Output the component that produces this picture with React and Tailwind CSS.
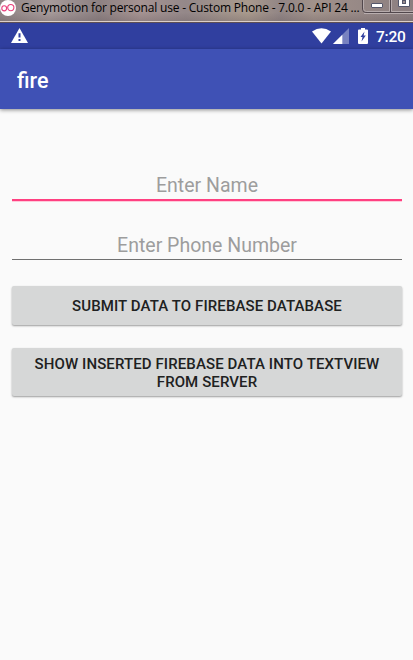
import React from "react";

function WindowBar() {
  return (
    <div className="flex h-[23px] items-start overflow-hidden border-b border-[#5e4f55] bg-[linear-gradient(to_right,#8f8484_0%,#a69a9a_12%,#8d8182_24%,#a59392_34%,#948889_45%,#a99a8d_60%,#918585_68%,#a1928b_76%,#8b7e80_100%)] font-['Open_Sans','Noto_Sans',sans-serif]">
      <div className="flex h-[22px] w-full items-start border-b border-[#dccfc8] bg-linear-to-b from-transparent from-60% to-[#5d505540]">
        <svg width="17" height="17" viewBox="0 0 17 17" className="shrink-0">
          <circle cx="8" cy="8" r="8" fill="#fff" />
          <ellipse cx="4.200" cy="8.300" rx="2.400" ry="2.600" fill="none" stroke="#e8407c" strokeWidth="1.1" />
          <circle cx="10.800" cy="7.600" r="3.100" fill="none" stroke="#e8407c" strokeWidth="1.1" />
        </svg>
        <span className="ml-1 w-[341px] shrink-0 text-[12px] leading-[16px] tracking-[-0.19px] whitespace-nowrap text-black">
          Genymotion for personal use - Custom Phone - 7.0.0 - API 24 ...
        </span>
        <svg width="51" height="14" viewBox="0 0 51 14" className="shrink-0">
          <path d="M0.5 0V9Q0.5 12.5 4 12.5H51M28.5 0V12" fill="none" stroke="#51474c" />
          <path d="M1.5 0V8.5Q1.5 11.5 4.5 11.5H27.5V0M29.5 0V11.5H51" fill="none" stroke="#b6abac" />
          <path d="M2 13.5H51" stroke="#b9aeaf" />
          <rect x="9.5" y="3.5" width="11" height="4" rx="0.5" fill="#fff" stroke="#55576a" />
          <path d="M36.500 0V6.500H47.500V0" fill="#fff" stroke="#55576a" />
          <rect x="40.500" y="0.500" width="3" height="3" fill="#998d8e" stroke="#55576a" />
        </svg>
      </div>
    </div>
  );
}

function StatusBar() {
  return (
    <div className="flex h-[26px] items-center bg-[#303f9f] pr-2 pl-[11px]">
      <svg width="17" height="15" viewBox="0 0 17 15" className="mb-[1px]">
        <path d="M8.500 0L17 15H0Z" fill="#fff" />
        <path d="M7.500 5.200H9.500V9.600H7.500ZM7.500 11H9.500V12.900H7.500Z" fill="#303f9f" />
      </svg>
      <svg width="19" height="16" viewBox="0 0 19 16" className="ml-auto">
        <path d="M0 3.600Q9.500 -3.200 19 3.600L9.500 15.500Z" fill="#fff" />
      </svg>
      <svg width="16" height="16" viewBox="0 0 16 16" className="ml-[2px]">
        <path d="M16 0V16H0Z" fill="#fff" opacity=".35" />
        <path d="M9.300 6.700V16H0Z" fill="#fff" />
      </svg>
      <svg width="10" height="16" viewBox="0 0 10 16" className="ml-[9px]">
        <path d="M3 0H7V1.500H9Q10 1.500 10 2.500V15Q10 16 9 16H1Q0 16 0 15V2.500Q0 1.500 1 1.500H3Z" fill="#fff" />
        <path d="M6.500 3.500L2.500 9H4.500L3.500 13.500L7.800 7.500H5.600Z" fill="#303f9f" />
      </svg>
      <span className="ml-[8px] w-[29px] pt-[3px] text-[15.500px] leading-none font-medium tracking-[-0.2px] whitespace-nowrap text-white">7:20</span>
    </div>
  );
}

function Field({ label, active }) {
  return (
    <div
      className={
        active
          ? "flex h-[32px] items-start justify-center border-b-2 border-[#ff4081] shadow-[0_1px_0_#ffc9da]"
          : "mt-[27px] flex h-[32px] items-start justify-center border-b border-[#707070]"
      }
    >
      <span
        className={
          active
            ? "pt-[2px] text-[19.500px] leading-[30px] whitespace-nowrap text-[#9d9d9d]"
            : "pt-[3px] text-[19.500px] leading-[30px] whitespace-nowrap text-[#9d9d9d]"
        }
      >
        {label}
      </span>
    </div>
  );
}

const button =
  "flex w-full items-center justify-center rounded-[2px] bg-[#d6d7d7] text-center text-[15px] leading-[18px] font-medium tracking-[0.1px] text-[#202121] shadow-[0_1px_2px_rgba(0,0,0,0.38)]";

export default function App() {
  return (
    <div className="flex h-[660px] w-[413px] flex-col overflow-hidden bg-[#fafafa] font-[Roboto,sans-serif]">
      <WindowBar />
      <StatusBar />
      <header className="flex h-[60px] shrink-0 items-center bg-[#3f51b5] pl-[17px] text-white shadow-[0_1px_4px_rgba(0,0,0,0.45)]">
        <h1 className="pt-[4px] text-[21.500px] font-medium">fire</h1>
      </header>
      <main className="flex flex-col pt-[60px] pr-[11px] pl-3">
        <Field label="Enter Name" active />
        <Field label="Enter Phone Number" />
        <button className={`${button} mt-[26px] h-[39px] pt-[1px]`}>SUBMIT DATA TO FIREBASE DATABASE</button>
        <button className={`${button} mt-[23px] h-[48px] pt-[2px]`}>
          <span>
            SHOW INSERTED FIREBASE DATA INTO TEXTVIEW
            <br />
            FROM SERVER
          </span>
        </button>
      </main>
    </div>
  );
}
